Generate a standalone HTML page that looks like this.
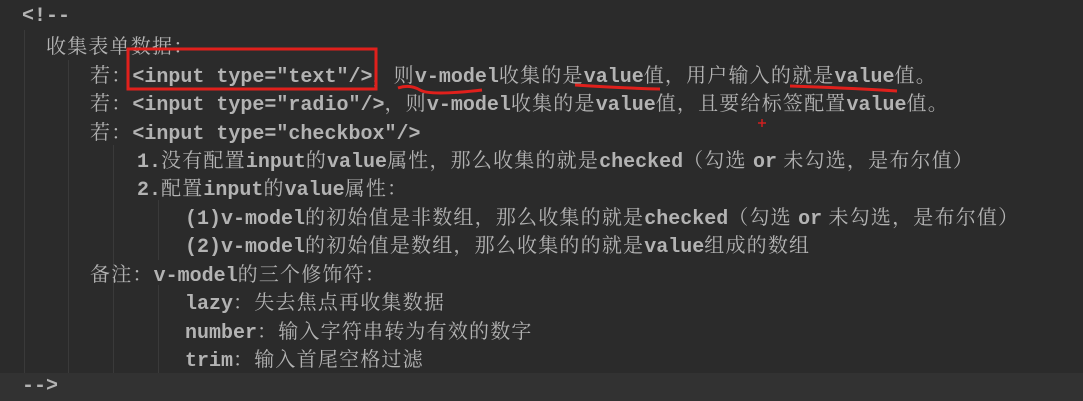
<!DOCTYPE html>
<html><head><meta charset="utf-8"><style>
body{margin:0;width:1083px;height:401px;background:#2b2b2b;overflow:hidden;position:relative;font-family:"Liberation Mono","Noto Sans CJK SC",monospace;font-size:20px;color:#b3b3b3;font-weight:bold}
.l{position:absolute;white-space:pre;line-height:28px;height:28px}
.g{position:absolute;width:1px;background:#3a3a3a}
.cur{position:absolute;left:0;top:373px;width:1083px;height:28px;background:#323232}
.c{font-family:"Noto Serif CJK SC","Noto Sans CJK SC",serif;font-weight:normal;letter-spacing:1.2px}
</style></head><body>
<div class="cur"></div>
<div class="g" style="left:24px;top:30px;height:343px"></div>
<div class="g" style="left:68px;top:60px;height:313px"></div>
<div class="g" style="left:113px;top:145px;height:228px"></div>
<div class="g" style="left:158px;top:200px;height:60px"></div>
<div class="g" style="left:158px;top:285px;height:88px"></div>
<div class="l" style="left:22px;top:3px">&lt;!--</div>
<div class="l" style="left:46px;top:31px"><span class="c">收集表单数据：</span></div>
<div class="l" style="left:90px;top:60px"><span class="c">若：</span>&lt;input type="text"/&gt;<span class="c">，则</span>v-model<span class="c">收集的是</span>value<span class="c">值，用户输入的就是</span>value<span class="c">值。</span></div>
<div class="l" style="left:90px;top:88px"><span class="c">若：</span>&lt;input type="radio"/&gt;<span class="c">，则</span>v-model<span class="c">收集的是</span>value<span class="c">值，且要给标签配置</span>value<span class="c">值。</span></div>
<div class="l" style="left:90px;top:117px"><span class="c">若：</span>&lt;input type="checkbox"/&gt;</div>
<div class="l" style="left:137px;top:145px">1.<span class="c">没有配置</span>input<span class="c">的</span>value<span class="c">属性，那么收集的就是</span>checked<span class="c">（勾选 </span>or<span class="c"> 未勾选，是布尔值）</span></div>
<div class="l" style="left:137px;top:173px">2.<span class="c">配置</span>input<span class="c">的</span>value<span class="c">属性：</span></div>
<div class="l" style="left:185px;top:202px">(1)v-model<span class="c">的初始值是非数组，那么收集的就是</span>checked<span class="c">（勾选 </span>or<span class="c"> 未勾选，是布尔值）</span></div>
<div class="l" style="left:185px;top:230px">(2)v-model<span class="c">的初始值是数组，那么收集的的就是</span>value<span class="c">组成的数组</span></div>
<div class="l" style="left:90px;top:259px"><span class="c">备注：</span>v-model<span class="c">的三个修饰符：</span></div>
<div class="l" style="left:185px;top:287px">lazy<span class="c">：失去焦点再收集数据</span></div>
<div class="l" style="left:185px;top:316px">number<span class="c">：输入字符串转为有效的数字</span></div>
<div class="l" style="left:185px;top:344px">trim<span class="c">：输入首尾空格过滤</span></div>
<div class="l" style="left:22px;top:373px">--&gt;</div>
<svg style="position:absolute;left:0;top:0" width="1083" height="401">
<rect x="128" y="49" width="248" height="40" fill="none" stroke="#e0201c" stroke-width="3"/>
<path d="M398 88 Q410 84 420 90 T482 90" stroke="#e0201c" stroke-width="3" fill="none"/>
<path d="M575 85 Q620 88 660 89" stroke="#e0201c" stroke-width="3" fill="none"/>
<path d="M790 86 Q850 88 897 91" stroke="#e0201c" stroke-width="3" fill="none"/>
<path d="M762 119 v8 M758 123 h8" stroke="#d02020" stroke-width="1.5"/>
</svg>
</body></html>
